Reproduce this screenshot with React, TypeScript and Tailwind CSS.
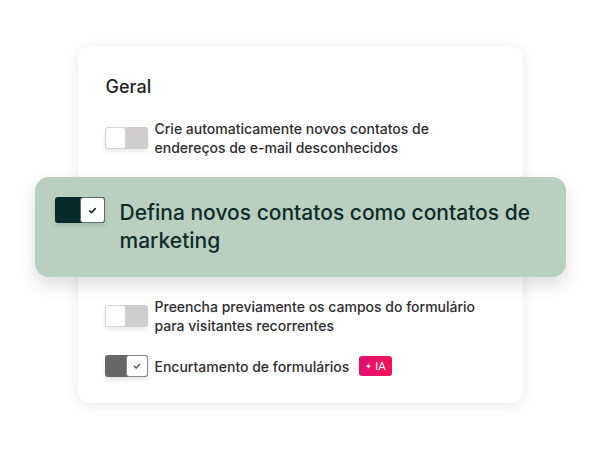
import React from 'react'

type ToggleProps = {
  on?: boolean
  big?: boolean
  dark?: boolean
}

function Check({ className }: { className?: string }) {
  return (
    <svg viewBox="0 0 12 12" className={className} fill="none">
      <path d="M2.8 6.3 L5 8.3 L9.2 3.8" stroke="currentColor" strokeWidth="1.7" strokeLinecap="round" strokeLinejoin="round" />
    </svg>
  )
}

function Toggle({ on = false, big = false, dark = false }: ToggleProps) {
  const size = big ? 'w-[50px] h-[26px]' : 'w-[43px] h-[22px]'
  if (!on) {
    return (
      <div className={`${size} flex shrink-0 rounded-[3px] bg-[#cfcdcc] shadow-[0_3px_4px_rgba(0,0,0,0.08)]`}>
        <div className="w-1/2 h-full bg-white rounded-[3px] border border-[#d8d6d5]" />
      </div>
    )
  }
  return (
    <div className={`${size} flex shrink-0 rounded-[3px] shadow-[0_3px_4px_rgba(0,0,0,0.1)] ${dark ? 'bg-[#062a29]' : 'bg-[#666666]'}`}>
      <div className="w-1/2 h-full" />
      <div className={`w-1/2 h-full bg-white rounded-[3px] border flex items-center justify-center ${dark ? 'border-[#5e6e6b] text-[#0c2423]' : 'border-[#8a8a8a] text-[#555]'}`}>
        <Check className={big ? 'w-[11px] h-[11px]' : 'w-[10px] h-[10px]'} />
      </div>
    </div>
  )
}

export default function App() {
  return (
    <div className="w-[600px] h-[449px] bg-white flex justify-center pt-[46px]" style={{ fontFamily: 'Inter, "Noto Sans", sans-serif' }}>
      <div className="w-[445px] h-[357px] bg-white rounded-[12px] shadow-[0_2px_14px_rgba(0,0,0,0.09)] px-[28px] pt-[29px] pb-[28px] flex flex-col gap-5">
        <h2 className="text-[18px] leading-[24px] font-medium text-[#1f1f1f]">Geral</h2>

        <div className="flex items-center gap-[7px] -ml-px">
          <Toggle />
          <p className="w-[335px] text-[14px] leading-[19px] font-medium text-[#2e2e2e]">
            Crie automaticamente novos contatos de endereços de e-mail desconhecidos
          </p>
        </div>

        <div className="-mx-[71px] bg-[#b9cfbf] rounded-[14px] shadow-[0_8px_18px_rgba(0,0,0,0.14)] pl-[20px] pr-[20px] py-[22px] flex items-start gap-[15px]">
          <div className="-mt-[2px]">
            <Toggle on big dark />
          </div>
          <p className="text-[21px] leading-[28px] font-medium text-[#0e2b2a]">
            Defina novos contatos como contatos de marketing
          </p>
        </div>

        <div className="flex items-center gap-[7px] -ml-px">
          <Toggle />
          <p className="w-[335px] text-[14px] leading-[19px] font-medium text-[#2e2e2e]">
            Preencha previamente os campos do formulário para visitantes recorrentes
          </p>
        </div>

        <div className="flex items-center gap-[7px] -ml-px">
          <Toggle on />
          <p className="text-[14px] leading-[19px] font-medium text-[#2e2e2e]">Encurtamento de formulários</p>
          <span className="ml-[3px] h-[20px] px-[6px] rounded-[3px] bg-gradient-to-r from-[#e0106d] to-[#f2125a] text-white text-[11px] leading-[20px] flex items-center gap-[3px]">
            <span className="text-[8px]">✦</span>IA
          </span>
        </div>
      </div>
    </div>
  )
}
